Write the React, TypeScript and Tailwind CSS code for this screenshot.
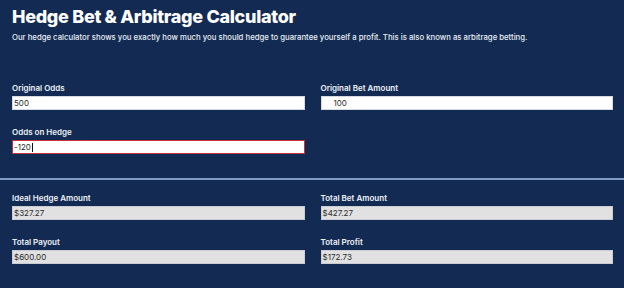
const inputs = [
  { label: "Original Odds", value: "500" },
  { label: "Original Bet Amount", value: "100", indent: true },
  { label: "Odds on Hedge", value: "-120", active: true },
];

const results = [
  { label: "Ideal Hedge Amount", value: "$327.27" },
  { label: "Total Bet Amount", value: "$427.27" },
  { label: "Total Payout", value: "$600.00" },
  { label: "Total Profit", value: "$172.73" },
];

function Field({
  label,
  value,
  indent,
  active,
  readOnly,
}: {
  label: string;
  value: string;
  indent?: boolean;
  active?: boolean;
  readOnly?: boolean;
}) {
  const box = readOnly
    ? "bg-[#e1e1e1] border-[#c9ccd3]"
    : active
      ? "bg-white border-[#c8323c]"
      : "bg-white border-[#d5d9e0]";

  return (
    <div className="flex flex-col gap-[2px]">
      <label className="text-[8px] leading-[11px] font-semibold text-[#eef2f8]">{label}</label>
      <div className={`flex h-[14px] items-center border ${box} ${indent ? "pl-[12px]" : "pl-[1px]"}`}>
        <span className="text-[8px] leading-none text-[#2a2a2a]">{value}</span>
        {active && <span className="ml-[1px] h-[9px] w-px bg-[#111]" />}
      </div>
    </div>
  );
}

export default function App() {
  return (
    <div className="h-[288px] w-[624px] overflow-hidden bg-[#132b53] font-['Inter',sans-serif]">
      <div className="px-3 pt-[5px]">
        <h1 className="text-[18px] leading-[24px] font-extrabold tracking-[-0.3px] text-white">
          Hedge Bet &amp; Arbitrage Calculator
        </h1>
        <p className="mt-[3px] text-[7.75px] leading-[11px] font-medium text-[#e8edf5]">
          Our hedge calculator shows you exactly how much you should hedge to guarantee yourself a profit. This is also
          known as arbitrage betting.
        </p>
      </div>

      <div className="mt-[40px] grid grid-cols-2 gap-x-4 gap-y-[17px] pl-3 pr-[11px]">
        {inputs.map((f) => (
          <Field key={f.label} {...f} />
        ))}
      </div>

      <div className="mt-[24px] h-[2px] bg-[#7f9bc6]" />

      <div className="mt-[13px] grid grid-cols-2 gap-x-4 gap-y-[17px] pl-3 pr-[11px]">
        {results.map((f) => (
          <Field key={f.label} {...f} readOnly />
        ))}
      </div>
    </div>
  );
}
